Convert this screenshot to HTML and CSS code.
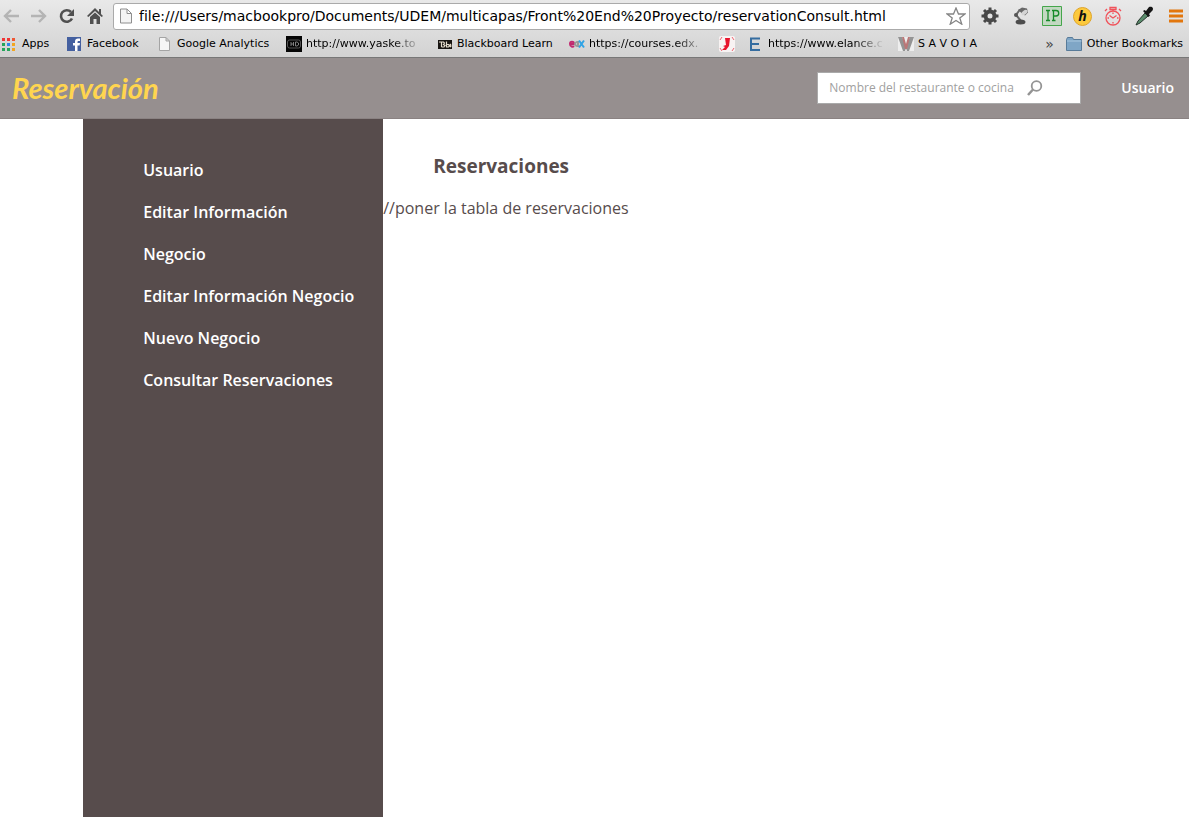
FILE: index.html
```html
<!DOCTYPE html>
<html lang="es">
<head>
<meta charset="utf-8">
<title>Reservación</title>
<link rel="stylesheet" href="styles.css">
</head>
<body>
<div class="browser">
  <div class="toolbar">
    <div class="nav-buttons">
      <button class="tool" aria-label="Back"><svg width="18" height="16" viewBox="0 0 18 16"><path d="M17 8H3M9 2L3 8l6 6" fill="none" stroke="#b4b4b4" stroke-width="2.4"/></svg></button>
      <button class="tool" aria-label="Forward"><svg width="18" height="16" viewBox="0 0 18 16"><path d="M1 8h14M9 2l6 6-6 6" fill="none" stroke="#b4b4b4" stroke-width="2.4"/></svg></button>
      <button class="tool" aria-label="Reload"><svg width="18" height="16" viewBox="0 0 18 16"><path d="M14 10.5A5.8 5.8 0 1 1 13 4" fill="none" stroke="#505050" stroke-width="2.6"/><path d="M16 1v7H9z" fill="#505050"/></svg></button>
      <button class="tool" aria-label="Home"><svg width="18" height="16" viewBox="0 0 18 16"><path d="M9 0L1 8l1.400 1L9 3l6.600 6L17 8l-2-2V1h-2v3zM9 4.500L4 9v7h3.500v-5h3v5H14V9z" fill="#505050"/></svg></button>
    </div>
    <div class="address">
      <svg width="14" height="16" viewBox="0 0 14 16"><path d="M1.500 1h6.500l4.500 4.500V15h-11zM8 1v4.500h4.500" fill="#f4f4f4" stroke="#8e8e8e"/></svg>
      <input class="url" type="text" aria-label="Address" value="file:///Users/macbookpro/Documents/UDEM/multicapas/Front%20End%20Proyecto/reservationConsult.html">
      <button class="tool" aria-label="Bookmark"><svg width="20" height="18" viewBox="0 0 20 18"><path d="M10 1l2.500 6H19l-5.200 4 2 6.200L10 13.500l-5.800 3.700 2-6.200L1 7h6.500z" fill="#fff" stroke="#858585" stroke-width="1.300"/></svg></button>
    </div>
    <div class="extensions">
      <button class="tool" aria-label="Settings"><svg width="20" height="20" viewBox="0 0 20 20"><circle cx="10" cy="10" r="4.500" fill="none" stroke="#484848" stroke-width="4"/><path d="M10 1.500v3M10 15.500v3M1.500 10h3M15.500 10h3M4 4l2 2M14 14l2 2M16 4l-2 2M6 14l-2 2" stroke="#484848" stroke-width="3"/></svg></button>
      <button class="tool" aria-label="Lamp"><svg width="20" height="20" viewBox="0 0 20 20"><path d="M9 3.500L5 9l5 6" fill="none" stroke="#666" stroke-width="2"/><path d="M7 4l4-2.500 5 1 1 4-3 3-4-3z" fill="#686868"/><ellipse cx="13.500" cy="6.500" rx="3.500" ry="2" fill="#d4d4d4" transform="rotate(-40 13.500 6.500)"/><ellipse cx="9.500" cy="16" rx="5" ry="2.500" fill="#4c4c4c"/><circle cx="5" cy="9" r="2" fill="#555"/></svg></button>
      <button class="tool" aria-label="IP"><svg width="20" height="20" viewBox="0 0 20 20"><path d="M.5.5h19v19H.5z" fill="#c3d8c2" stroke="#45a64b"/><path d="M4 4.500h4M6 4.500v10M4 14.500h4M10 4.500h4a2.500 2.500 0 0 1 0 5.500h-3M11.500 4.500v10M10 14.500h3.500" fill="none" stroke="#168a28" stroke-width="1.300"/></svg></button>
      <button class="tool badge" aria-label="Honey">h</button>
      <button class="tool" aria-label="Timer"><svg width="20" height="20" viewBox="0 0 20 20"><g fill="none" stroke="#f0525a" stroke-width="1.300"><circle cx="10" cy="12" r="7"/><path d="M7 1.500h6v2H7zM10 3v2M2 5l2-2M18 5l-2-2M6.500 9.500l3.500 2.500 3.500-2.500M10 16v1.500M4.500 12H6M14 12h1.500M10 6.500V8"/></g></svg></button>
      <button class="tool" aria-label="Color picker"><svg width="20" height="20" viewBox="0 0 20 20"><path d="M11 7l3 3-8 7-4 2 2-4z" fill="#5a8c6c" stroke="#24332a"/><path d="M9 5l1.500-1L12 5l3-4c3-1 5 1 3.500 3.500L15 8l1 1.500-1.500 1.500z" fill="#151515"/></svg></button>
      <button class="tool menu-button" aria-label="Menu"><svg width="14" height="14" viewBox="0 0 14 14"><path d="M0 2h14M0 7h14M0 12h14" stroke="#e2760d" stroke-width="3"/></svg></button>
    </div>
  </div>
  <nav class="bookmarks" aria-label="Bookmarks">
    <a class="bookmark" href="#"><svg width="16" height="16" viewBox="0 0 16 16"><path d="M0 2h3v3H0zM5 2h3v3H5z" fill="#ef3434"/><path d="M10 2h3v3h-3z" fill="#ef5734"/><path d="M0 7h3v3H0zM0 12h3v3H0zM5 12h3v3H5z" fill="#25a55b"/><path d="M5 7h3v3H5z" fill="#2f86e8"/><path d="M10 7h3v3h-3zM10 12h3v3h-3z" fill="#f2a622"/></svg><span class="label">Apps</span></a>
    <a class="bookmark" href="#"><svg width="16" height="16" viewBox="0 0 16 16"><path d="M0 1h14v14H0z" fill="#4460a0"/><path d="M8 15V9.500H6V7h2V5.500C8 3.500 9.200 2.500 11 2.500h2V5h-1.300c-.9 0-1.200.4-1.200 1.100V7H13l-.4 2.500h-2.100V15z" fill="#fff"/></svg><span class="label">Facebook</span></a>
    <a class="bookmark" href="#"><svg width="16" height="16" viewBox="0 0 16 16"><path d="M2.500 1.500H9l3.500 3.500v9.500h-10zM9 1.500V5h3.500" fill="#f6f6f6" stroke="#a4a4a4"/></svg><span class="label">Google Analytics</span></a>
    <a class="bookmark" href="#"><svg width="16" height="16" viewBox="0 0 16 16"><path d="M0 0h16v16H0z" fill="#050505"/><rect x="1.500" y="4" width="13" height="8" rx="2" fill="none" stroke="#555"/><path d="M5 6v4M7.500 6v4M5 8h2.500M9.500 6v4h1.500l1.500-1V7L11 6z" fill="none" stroke="#999" stroke-width=".8"/></svg><span class="label faded">http://www.yaske.to</span></a>
    <a class="bookmark" href="#"><svg width="16" height="16" viewBox="0 0 16 16"><path d="M1 4h14v9H1z" fill="#181512"/><path d="M2 6h2.500v5M4.500 6h2l1 1-1 1.500 1.500 1-1 1.500H4.500M9.500 5.500V11h2l1-1-1-1.500h-2M14 8l-1 1 1 1-1 1" fill="none" stroke="#e5ddcc" stroke-width="1.200"/></svg><span class="label">Blackboard Learn</span></a>
    <a class="bookmark" href="#"><svg width="16" height="16" viewBox="0 0 16 16"><g fill="none" stroke-width="2"><path d="M1 8h4c0-3-4-3-4 0s3 3 4 2" stroke="#c12a70"/><path d="M9 5v6M9 8c0-3-3-2-3 0s3 3 3 0" stroke="#999"/><path d="M10 4.500l5 7M15 4.500l-5 7" stroke="#2fa3e5"/></g></svg><span class="label faded">https://courses.edx.</span></a>
    <a class="bookmark" href="#" aria-label="Red bookmark"><svg width="16" height="16" viewBox="0 0 16 16"><rect width="16" height="16" rx="2" fill="#f8f3f3"/><path d="M6 2h5l-1 8-3 4H3l3-3-2-1 3-1z" fill="#e8142c"/><path d="M1 4l2-3M13 1l2 3M1 12l2 3M15 12l-2 3" stroke="#ee6672"/></svg></a>
    <a class="bookmark" href="#"><svg width="16" height="16" viewBox="0 0 16 16"><path d="M12 2.500H3v11.500h9M3 8h8" fill="none" stroke="#356da0" stroke-width="2"/></svg><span class="label faded">https://www.elance.c</span></a>
    <a class="bookmark" href="#"><svg width="16" height="16" viewBox="0 0 16 16"><path d="M0 1h16v14H0z" fill="#eee"/><path d="M0 1h4l4 9 4-9h4l-5 14H9l-1-3-1 3H5z" fill="#949494"/><path d="M4 1h2l2 7 2-7h2L9 13H7z" fill="#bb7777"/></svg><span class="label">S A V O I A</span></a>
    <button class="tool more" aria-label="More bookmarks">»</button>
    <a class="bookmark" href="#"><svg width="17" height="16" viewBox="0 0 17 16"><path d="M.5 3.500l1-2h5l1 2h8v11H.5z" fill="#7fa6c6" stroke="#587b99"/><path d="M1 5h14.500" stroke="#abc8df"/></svg><span class="label">Other Bookmarks</span></a>
  </nav>
</div>
<header class="site-header">
  <a class="logo" href="#">Reservación</a>
  <form class="search">
    <input class="search-input" type="text" aria-label="Buscar" placeholder="Nombre del restaurante o cocina">
    <button class="tool" type="button" aria-label="Buscar"><svg width="16" height="16" viewBox="0 0 16 16"><circle cx="9.500" cy="6" r="4.800" fill="none" stroke="#949494" stroke-width="1.800"/><path d="M6 9.500L1 15" stroke="#949494" stroke-width="2.500"/></svg></button>
  </form>
  <a class="user" href="#">Usuario</a>
</header>
<div class="page">
  <nav class="sidebar" aria-label="Menú">
    <a class="menu-link" href="#">Usuario</a>
    <a class="menu-link" href="#">Editar Información</a>
    <a class="menu-link" href="#">Negocio</a>
    <a class="menu-link" href="#">Editar Información Negocio</a>
    <a class="menu-link" href="#">Nuevo Negocio</a>
    <a class="menu-link" href="#">Consultar Reservaciones</a>
  </nav>
  <main class="content">
    <h1 class="title">Reservaciones</h1>
    <p class="text">//poner la tabla de reservaciones</p>
  </main>
</div>
</body>
</html>
```
FILE: styles.css
```css
* { box-sizing: border-box; }
body {
  margin: 0;
  min-height: 100vh;
  display: flex;
  flex-direction: column;
  background: #fff;
  color: #574c4c;
  font: 16px/24px "Open Sans", sans-serif;
}
a { color: inherit; text-decoration: none; }
svg { display: block; flex: none; }
.tool {
  padding: 0;
  border: 0;
  background: none;
  font: inherit;
  color: inherit;
}

.browser {
  padding-bottom: 1px;
  background: linear-gradient(#e9e9e9, #d2d2d2);
  border-bottom: 1px solid #777;
  color: #000;
  font-family: "DejaVu Sans", sans-serif;
}
.toolbar {
  display: flex;
  align-items: center;
  height: 32px;
  padding: 0 6px 0 2px;
}
.nav-buttons { display: flex; gap: 10px; margin-right: 9px; }
.address {
  flex: 1;
  display: flex;
  align-items: center;
  height: 27px;
  padding: 0 3px 0 5px;
  border: 1px solid #aaa;
  border-radius: 3px;
  background: #fff;
}
.url {
  flex: 1;
  min-width: 0;
  margin: 0 6px;
  padding: 0;
  border: 0;
  outline: 0;
  background: none;
  color: #000;
  font: 14px/20px "DejaVu Sans", sans-serif;
}
.extensions { display: flex; align-items: center; gap: 11px; margin-left: 10px; }
.menu-button { margin-left: 4px; }
.badge {
  width: 19px;
  height: 19px;
  border: 1px solid #dfa52c;
  border-radius: 50%;
  background: #fcc93c;
  color: #111;
  font: italic bold 14px/16px "Open Sans", sans-serif;
}
.bookmarks {
  display: grid;
  grid-template-columns: 65px 90px 129px 151px 132px 150px 29px 150px 1fr auto auto;
  align-items: center;
  height: 24px;
  padding: 0 6px 0 2px;
  font-size: 11px;
  line-height: 18px;
}
.bookmark { display: flex; align-items: center; gap: 4px; }
.label { white-space: nowrap; }
.faded {
  width: 116px;
  overflow: hidden;
  mask-image: linear-gradient(90deg, #000 75%, transparent);
}
.more { margin-right: 12px; color: #444; font-size: 14px; }

.site-header {
  display: flex;
  align-items: center;
  height: 61px;
  padding: 0 15px 0 12px;
  background: #968f8f;
  border-bottom: 1px solid #8a8282;
}
.logo {
  margin-right: auto;
  color: #ffd54f;
  font: italic bold 29px/44px Lato, sans-serif;
}
.search {
  display: flex;
  align-items: center;
  width: 264px;
  height: 32px;
  margin-right: 40px;
  padding-left: 11px;
  border: 1px solid #aaa;
  background: #fff;
}
.search-input {
  width: 198px;
  padding: 0;
  border: 0;
  outline: 0;
  background: none;
  font: 12px/20px "Open Sans", sans-serif;
}
.search-input::placeholder { color: #a0a0a0; opacity: 1; }
.user { color: #fff; font-size: 14px; font-weight: 600; }

.page { flex: 1; display: flex; padding-left: 7%; }
.sidebar {
  display: flex;
  flex-direction: column;
  gap: 18px;
  width: 300px;
  padding: 39px 0 0 60px;
  background: #574c4c;
  color: #fff;
  font-weight: 600;
}
.content { flex: 1; }
.title { margin: 35px 0 18px 50px; font-size: 19px; line-height: 24px; font-weight: 700; }
.text { margin: 0; }
```
